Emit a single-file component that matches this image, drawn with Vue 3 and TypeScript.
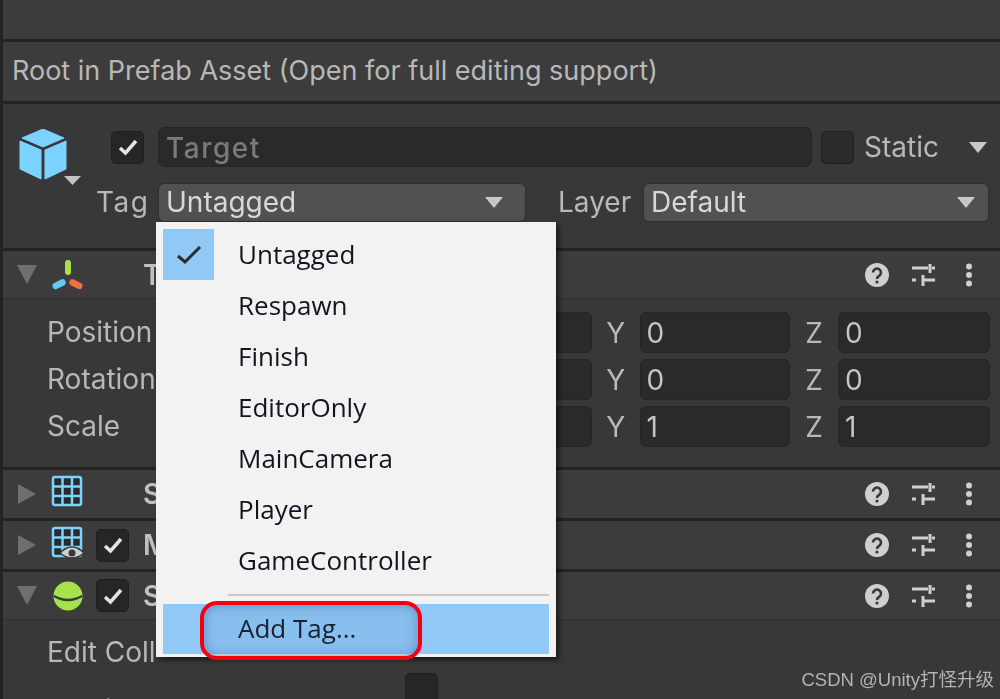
<script setup lang="ts">
const tags = ['Untagged', 'Respawn', 'Finish', 'EditorOnly', 'MainCamera', 'Player', 'GameController']

const transformRows = [
  { label: 'Position', y: '0', z: '0' },
  { label: 'Rotation', y: '0', z: '0' },
  { label: 'Scale', y: '1', z: '1' },
]
</script>

<template>
  <div class="page">
    <div class="inspector">
      <div class="top-bar"></div>
      <div class="prefab-bar">Root in Prefab Asset (Open for full editing support)</div>

      <section class="object-header">
        <div class="name-row">
          <svg class="cube" width="62" height="60" viewBox="0 0 62 60">
            <path d="M24 0 L45 9 L24 18 L3 9 Z" fill="#7dd3ff" stroke="#7dd3ff" stroke-linejoin="round" />
            <path d="M1 12 L22 21 L22 50 L1 40 Z" fill="#7dd3ff" stroke="#7dd3ff" stroke-linejoin="round" />
            <path d="M26 21 L47 12 L47 40 L26 50 Z" fill="#7dd3ff" stroke="#7dd3ff" stroke-linejoin="round" />
            <path d="M45 47 H62 L53.500 56 Z" fill="#c4c4c4" />
          </svg>
          <span class="check">
            <svg width="22" height="18" viewBox="0 0 22 18"><path d="M3 10 L8.500 15 L19 3" fill="none" stroke="#e4e4e4" stroke-width="3.500" /></svg>
          </span>
          <div class="name-input">Target</div>
          <span class="check static-check"></span>
          <span class="static-label">Static</span>
          <svg class="caret static-caret" width="18" height="11" viewBox="0 0 18 11"><path d="M0 0 H18 L9 11 Z" /></svg>
        </div>
        <div class="tag-row">
          <span class="tag-label">Tag</span>
          <div class="dropdown tag-dropdown">
            <span>Untagged</span>
            <svg class="caret" width="18" height="11" viewBox="0 0 18 11"><path d="M0 0 H18 L9 11 Z" /></svg>
          </div>
          <span class="layer-label">Layer</span>
          <div class="dropdown layer-dropdown">
            <span>Default</span>
            <svg class="caret" width="18" height="11" viewBox="0 0 18 11"><path d="M0 0 H18 L9 11 Z" /></svg>
          </div>
        </div>
      </section>

      <section class="component transform">
        <header class="comp-header">
          <svg class="fold" width="20" height="20" viewBox="0 0 20 20"><path d="M0 0 H20 L10 19 Z" /></svg>
          <svg class="comp-icon" width="34" height="30" viewBox="0 0 34 30">
            <rect x="14" y="0" width="6" height="15" rx="3" fill="#a5e24b" />
            <rect x="1" y="21" width="14" height="6.500" rx="3.200" fill="#63c6f7" transform="rotate(-27 8 24)" />
            <rect x="18" y="21" width="14" height="6.500" rx="3.200" fill="#f0703c" transform="rotate(27 25 24)" />
          </svg>
          <span class="comp-check-slot"></span>
          <span class="comp-title">T</span>
          <span class="comp-actions">
            <svg width="24" height="24" viewBox="0 0 24 24"><circle cx="12" cy="12" r="12" fill="#cfcfcf" /><path d="M8 9.500 a4 4 0 1 1 6 3.500 q-2 1 -2 3" fill="none" stroke="#383838" stroke-width="2.600" /><circle cx="12" cy="19" r="1.600" fill="#383838" /></svg>
            <svg width="24" height="24" viewBox="0 0 24 24"><path d="M1 5 H17 M21 5 H24 M1 17 H5 M12 17 H24 M19 1 V10 M12 12 V23" fill="none" stroke="#cfcfcf" stroke-width="3" /></svg>
            <svg width="8" height="24" viewBox="0 0 8 24"><circle cx="4" cy="3.500" r="3" fill="#cfcfcf" /><circle cx="4" cy="12" r="3" fill="#cfcfcf" /><circle cx="4" cy="20.500" r="3" fill="#cfcfcf" /></svg>
          </span>
        </header>
        <div class="fields">
          <div v-for="row in transformRows" :key="row.label" class="field-row">
            <span class="field-label">{{ row.label }}</span>
            <div class="axis"><span></span><div class="num"></div></div>
            <div class="axis axis-y"><span>Y</span><div class="num">{{ row.y }}</div></div>
            <div class="axis"><span>Z</span><div class="num">{{ row.z }}</div></div>
          </div>
        </div>
      </section>

      <section class="component">
        <header class="comp-header collapsed">
          <svg class="fold" width="18" height="20" viewBox="0 0 18 20"><path d="M0 0 L18 10 L0 20 Z" /></svg>
          <svg class="comp-icon grid-icon" width="34" height="32" viewBox="0 0 34 32">
            <rect x="2" y="2" width="28" height="28" rx="2" fill="#2a2a2a" stroke="#7dd3ff" stroke-width="2.500" />
            <path d="M11.500 2 V30 M21 2 V30 M2 11.500 H30 M2 21 H30" stroke="#7dd3ff" stroke-width="2.500" />
          </svg>
          <span class="comp-check-slot"></span>
          <span class="comp-title">S</span>
          <span class="comp-actions">
            <svg width="24" height="24" viewBox="0 0 24 24"><circle cx="12" cy="12" r="12" fill="#cfcfcf" /><path d="M8 9.500 a4 4 0 1 1 6 3.500 q-2 1 -2 3" fill="none" stroke="#383838" stroke-width="2.600" /><circle cx="12" cy="19" r="1.600" fill="#383838" /></svg>
            <svg width="24" height="24" viewBox="0 0 24 24"><path d="M1 5 H17 M21 5 H24 M1 17 H5 M12 17 H24 M19 1 V10 M12 12 V23" fill="none" stroke="#cfcfcf" stroke-width="3" /></svg>
            <svg width="8" height="24" viewBox="0 0 8 24"><circle cx="4" cy="3.500" r="3" fill="#cfcfcf" /><circle cx="4" cy="12" r="3" fill="#cfcfcf" /><circle cx="4" cy="20.500" r="3" fill="#cfcfcf" /></svg>
          </span>
        </header>
      </section>

      <section class="component">
        <header class="comp-header collapsed">
          <svg class="fold" width="18" height="20" viewBox="0 0 18 20"><path d="M0 0 L18 10 L0 20 Z" /></svg>
          <svg class="comp-icon grid-icon" width="34" height="36" viewBox="0 0 34 36">
            <rect x="2" y="2" width="28" height="28" rx="2" fill="#2a2a2a" stroke="#7dd3ff" stroke-width="2.500" />
            <path d="M11.500 2 V30 M21 2 V30 M2 11.500 H30 M2 21 H30" stroke="#7dd3ff" stroke-width="2.500" />
            <path d="M9 27 Q21 15 33 27 Q21 37 9 27 Z" fill="#d0d0d0" stroke="#383838" stroke-width="1.500" />
            <circle cx="21" cy="27" r="3.500" fill="#383838" />
          </svg>
          <span class="check comp-check">
            <svg width="22" height="18" viewBox="0 0 22 18"><path d="M3 10 L8.500 15 L19 3" fill="none" stroke="#e4e4e4" stroke-width="3.500" /></svg>
          </span>
          <span class="comp-title">M</span>
          <span class="comp-actions">
            <svg width="24" height="24" viewBox="0 0 24 24"><circle cx="12" cy="12" r="12" fill="#cfcfcf" /><path d="M8 9.500 a4 4 0 1 1 6 3.500 q-2 1 -2 3" fill="none" stroke="#383838" stroke-width="2.600" /><circle cx="12" cy="19" r="1.600" fill="#383838" /></svg>
            <svg width="24" height="24" viewBox="0 0 24 24"><path d="M1 5 H17 M21 5 H24 M1 17 H5 M12 17 H24 M19 1 V10 M12 12 V23" fill="none" stroke="#cfcfcf" stroke-width="3" /></svg>
            <svg width="8" height="24" viewBox="0 0 8 24"><circle cx="4" cy="3.500" r="3" fill="#cfcfcf" /><circle cx="4" cy="12" r="3" fill="#cfcfcf" /><circle cx="4" cy="20.500" r="3" fill="#cfcfcf" /></svg>
          </span>
        </header>
      </section>

      <section class="component last">
        <header class="comp-header">
          <svg class="fold" width="20" height="20" viewBox="0 0 20 20"><path d="M0 0 H20 L10 19 Z" /></svg>
          <svg class="comp-icon" width="34" height="30" viewBox="0 0 34 30">
            <circle cx="17" cy="15" r="14.500" fill="#a5e24b" />
            <path d="M3 15 Q17 23 31 15" fill="none" stroke="#3a3a3a" stroke-width="2.500" />
          </svg>
          <span class="check comp-check">
            <svg width="22" height="18" viewBox="0 0 22 18"><path d="M3 10 L8.500 15 L19 3" fill="none" stroke="#e4e4e4" stroke-width="3.500" /></svg>
          </span>
          <span class="comp-title">S</span>
          <span class="comp-actions">
            <svg width="24" height="24" viewBox="0 0 24 24"><circle cx="12" cy="12" r="12" fill="#cfcfcf" /><path d="M8 9.500 a4 4 0 1 1 6 3.500 q-2 1 -2 3" fill="none" stroke="#383838" stroke-width="2.600" /><circle cx="12" cy="19" r="1.600" fill="#383838" /></svg>
            <svg width="24" height="24" viewBox="0 0 24 24"><path d="M1 5 H17 M21 5 H24 M1 17 H5 M12 17 H24 M19 1 V10 M12 12 V23" fill="none" stroke="#cfcfcf" stroke-width="3" /></svg>
            <svg width="8" height="24" viewBox="0 0 8 24"><circle cx="4" cy="3.500" r="3" fill="#cfcfcf" /><circle cx="4" cy="12" r="3" fill="#cfcfcf" /><circle cx="4" cy="20.500" r="3" fill="#cfcfcf" /></svg>
          </span>
        </header>
        <div class="collider-row">Edit Coll</div>
        <div class="trigger-row">
          <span class="trigger-label">Is Trigger</span>
          <span class="check"></span>
        </div>
      </section>
    </div>

    <div class="tag-menu">
      <div
        v-for="(tag, i) in tags"
        :key="tag"
        class="menu-item"
      >
        <span class="tick" :class="{ on: i === 0 }">
          <svg v-if="i === 0" width="26" height="22" viewBox="0 0 26 22"><path d="M2 12 L9 18 L24 3" fill="none" stroke="#2b2b2b" stroke-width="3" /></svg>
        </span>
        <span class="menu-text">{{ tag }}</span>
      </div>
      <div class="menu-sep"></div>
      <div class="menu-item add-tag">
        <span class="tick"></span>
        <span class="menu-text">Add Tag...</span>
        <span class="red-mark"></span>
      </div>
    </div>

    <div class="watermark">CSDN @Unity打怪升级</div>
  </div>
</template>

<style scoped>
.page {
  position: relative;
  width: 1000px;
  height: 699px;
  overflow: hidden;
  background: #383838;
  font-family: Inter, "Liberation Sans", sans-serif;
  color: #b8b8b8;
}

.inspector {
  border-left: 3px solid #232323;
  height: 699px;
  box-sizing: border-box;
  filter: blur(0.6px);
  font-size: 28px;
}

.top-bar {
  height: 39px;
  border-bottom: 3px solid #232323;
  background: #3c3c3c;
}

.prefab-bar {
  height: 59px;
  line-height: 58px;
  padding-left: 9px;
  border-bottom: 3px solid #232323;
  background: #3c3c3c;
  font-size: 27px;
  white-space: nowrap;
}

.object-header {
  height: 147px;
  box-sizing: border-box;
  padding-top: 23px;
  border-bottom: 3px solid #232323;
}

.name-row {
  display: flex;
  align-items: center;
  height: 40px;
  padding-left: 16px;
}

.cube {
  flex: none;
  align-self: flex-start;
  margin-top: 2px;
  margin-right: 30px;
}

.check {
  flex: none;
  display: flex;
  align-items: center;
  justify-content: center;
  width: 33px;
  height: 33px;
  border-radius: 5px;
  background: #262626;
  border: 1px solid #1f1f1f;
  box-sizing: border-box;
}

.name-input {
  flex: none;
  width: 654px;
  height: 40px;
  line-height: 40px;
  margin-left: 14px;
  padding-left: 7px;
  box-sizing: border-box;
  border-radius: 7px;
  border: 1px solid #252525;
  background: #2a2a2a;
  color: #7b7b7b;
  letter-spacing: 1.500px;
  font-weight: 500;
}

.static-check {
  margin-left: 9px;
  background: #2b2b2b;
}

.static-label {
  margin-left: 10px;
  width: 105px;
}

.caret path {
  fill: #c8c8c8;
}

.static-caret {
  flex: none;
}

.tag-row {
  display: flex;
  align-items: center;
  height: 39px;
  margin-top: 16px;
  padding-left: 93px;
}

.tag-row span {
  position: relative;
  top: -1px;
}

.tag-label {
  width: 62px;
  letter-spacing: 1.500px;
}

.layer-label {
  width: 85px;
  margin-left: 32px;
}

.dropdown {
  display: flex;
  align-items: center;
  justify-content: space-between;
  height: 39px;
  box-sizing: border-box;
  padding: 0 22px 0 7px;
  border-radius: 6px;
  background: #515151;
  border: 1px solid #2e2e2e;
  color: #d8d8d8;
}

.tag-dropdown {
  width: 368px;
}

.layer-dropdown {
  width: 346px;
  padding-right: 13px;
}

.component {
  border-bottom: 3px solid #232323;
}

.component.last {
  border-bottom: none;
}

.comp-header {
  display: flex;
  align-items: center;
  height: 48px;
  box-sizing: border-box;
  padding-left: 14px;
  background: #3c3c3c;
  border-bottom: 1px solid #2f2f2f;
}

.comp-header.collapsed {
  border-bottom: none;
}

.fold {
  flex: none;
  width: 20px;
}

.fold path {
  fill: #6f6f6f;
}

.comp-icon {
  flex: none;
  margin-left: 14px;
}

.grid-icon {
  align-self: flex-start;
  margin-top: 5px;
}

.comp-check-slot,
.comp-check {
  flex: none;
  width: 33px;
  height: 33px;
  margin-left: 11px;
}

.comp-title {
  margin-left: 14px;
  color: #c0c0c0;
  font-weight: 600;
  white-space: nowrap;
}

.comp-actions {
  display: flex;
  align-items: center;
  gap: 22px;
  margin-left: auto;
  margin-right: 27px;
}

.comp-actions svg + svg + svg {
  margin-left: 8px;
}

.fields {
  display: grid;
  gap: 6px;
  padding: 11px 10px 22px 44px;
}

.field-row {
  display: grid;
  grid-template-columns: 1fr 200px 198px 200px;
  height: 41px;
  align-items: center;
  line-height: 45px;
}

.axis {
  display: flex;
  align-items: center;
  justify-content: space-between;
  line-height: 42px;
}

.axis span {
  width: 48px;
  text-align: center;
}

.num {
  width: 152px;
  height: 41px;
  line-height: 40px;
  box-sizing: border-box;
  padding-left: 6px;
  border-radius: 6px;
  border: 1px solid #252525;
  background: #2a2a2a;
  color: #c4c4c4;
}

.collider-row {
  padding-left: 44px;
  height: 53px;
  line-height: 64px;
  white-space: nowrap;
}

.trigger-row {
  display: flex;
  align-items: flex-start;
  height: 60px;
  padding-left: 44px;
  line-height: 60px;
}

.trigger-label {
  width: 358px;
  margin-top: 7px;
  white-space: nowrap;
}

.tag-menu {
  position: absolute;
  left: 156px;
  top: 222px;
  width: 400px;
  height: 435px;
  box-sizing: border-box;
  padding: 7px 7px 3px;
  background: #f2f2f2;
  box-shadow: 3px 3px 5px rgba(0, 0, 0, 0.55);
  color: #14141f;
  font-family: "Open Sans", "Noto Sans", sans-serif;
  font-size: 26px;
  font-weight: 500;
  filter: blur(0.4px);
}

.menu-item {
  display: flex;
  align-items: center;
  height: 51px;
}

.menu-text {
  position: relative;
  top: -1px;
}

.tick {
  flex: none;
  display: flex;
  align-items: center;
  justify-content: center;
  width: 51px;
  height: 51px;
  margin-right: 24px;
}

.tick.on {
  background: #90c8f6;
}

.menu-sep {
  height: 2px;
  margin: 8px 0 8px 65px;
  background: #c9c9c9;
}

.add-tag {
  position: relative;
  height: 50px;
  background: #90c8f6;
}

.red-mark {
  position: absolute;
  left: 37px;
  top: -3px;
  width: 222px;
  height: 59px;
  box-sizing: border-box;
  border: 4px solid #f5000f;
  border-radius: 17px;
  background: rgba(70, 130, 180, 0.12);
  box-shadow: inset 0 0 12px rgba(50, 100, 150, 0.5);
}

.watermark {
  position: absolute;
  right: 6px;
  bottom: 8px;
  font-family: "Liberation Sans", "Noto Sans CJK SC", sans-serif;
  font-size: 18.500px;
  color: #b3b3b3;
}
</style>
